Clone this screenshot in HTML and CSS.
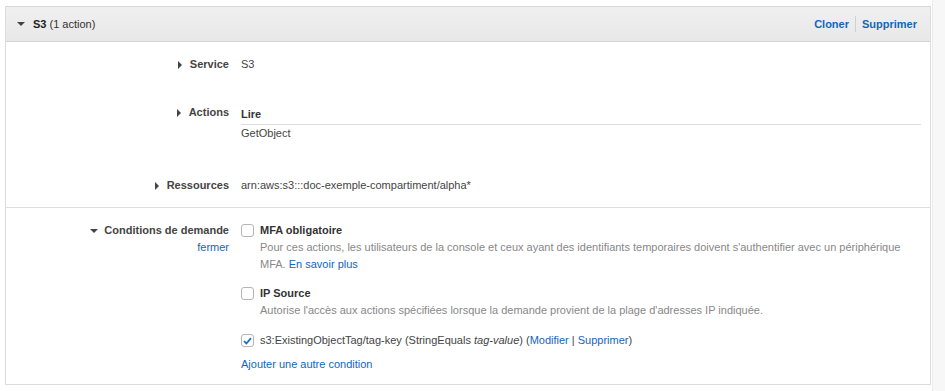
FILE: index.html
```html
<!DOCTYPE html>
<html lang="fr">
<head>
    <meta charset="UTF-8">
    <title>S3 (1 action)</title>
    <link rel="stylesheet" href="styles.css">
</head>
<body>

<div class="page">
    <div class="panel">
        <div class="panel-header">
            <div class="panel-title">
                <span class="caret-down"></span>
                <strong>S3</strong>&nbsp;(1 action)
            </div>
            <div class="panel-actions">
                <a href="#">Cloner</a>
                <span class="sep"></span>
                <a href="#">Supprimer</a>
            </div>
        </div>

        <div class="section">
            <div class="row row-service">
                <div class="label"><span class="caret-right"></span>Service</div>
                <div class="value">S3</div>
            </div>
            <div class="row row-actions">
                <div class="label"><span class="caret-right"></span>Actions</div>
                <div class="value">
                    <div class="group-title">Lire</div>
                    <div>GetObject</div>
                </div>
            </div>
            <div class="row">
                <div class="label"><span class="caret-right"></span>Ressources</div>
                <div class="value">arn:aws:s3:::doc-exemple-compartiment/alpha*</div>
            </div>
        </div>

        <div class="section section-conditions">
            <div class="row">
                <div class="label">
                    <div><span class="caret-down"></span>Conditions de demande</div>
                    <a href="#">fermer</a>
                </div>
                <div class="value">
                    <div class="condition">
                        <span class="checkbox"></span>
                        <div>
                            <div class="condition-name">MFA obligatoire</div>
                            <div class="condition-desc">Pour ces actions, les utilisateurs de la console et ceux ayant des identifiants temporaires doivent s'authentifier avec un périphérique MFA. <a href="#">En savoir plus</a></div>
                        </div>
                    </div>
                    <div class="condition">
                        <span class="checkbox"></span>
                        <div>
                            <div class="condition-name">IP Source</div>
                            <div class="condition-desc">Autorise l'accès aux actions spécifiées lorsque la demande provient de la plage d'adresses IP indiquée.</div>
                        </div>
                    </div>
                    <div class="condition condition-set">
                        <span class="checkbox checked">
                            <svg width="9" height="8" viewBox="0 0 9 8"><path d="M1 4.2 L3.4 6.5 L8 1.2" fill="none" stroke="#1a6fc9" stroke-width="1.8"/></svg>
                        </span>
                        <div>s3:ExistingObjectTag/tag-key (StringEquals <em>tag-value</em>) (<a href="#">Modifier</a> | <a href="#">Supprimer</a>)</div>
                    </div>
                    <a href="#" class="add-condition">Ajouter une autre condition</a>
                </div>
            </div>
        </div>
    </div>
    <div class="scroll-strip"></div>
</div>

</body>
</html>
```

FILE: styles.css
```css
body {
    margin: 0;
    font-family: "Liberation Sans", Arial, sans-serif;
    font-size: 11px;
    line-height: 17px;
    color: #444;
    background: #fff;
}
a {
    color: #1166bb;
    text-decoration: none;
}
.page {
    display: flex;
    height: 391px;
}
.panel {
    width: 924px;
    margin: 6px 0 0 5px;
    height: 377px;
    border: 1px solid #dcdcdc;
    border-top-color: #d6d6d6;
}
.scroll-strip {
    flex: 1;
    margin-left: 1px;
    background: #f7f7f7;
    border-left: 1px solid #ececec;
}
.panel-header {
    display: flex;
    justify-content: space-between;
    align-items: center;
    height: 34px;
    padding: 0 13px 0 11px;
    background: linear-gradient(#f0f0f0, #e8e8e8);
    border-bottom: 1px solid #d4d4d4;
}
.panel-title {
    display: flex;
    align-items: center;
    color: #333;
}
.panel-title strong {
    color: #222;
}
.panel-title .caret-down {
    margin-right: 8px;
}
.panel-actions {
    display: flex;
    align-items: center;
    font-weight: bold;
}
.panel-actions .sep {
    width: 1px;
    height: 16px;
    background: #d0d0d0;
    margin: 0 6px;
}
.caret-down {
    display: inline-block;
    width: 0;
    height: 0;
    border-left: 4px solid transparent;
    border-right: 4px solid transparent;
    border-top: 4px solid #444;
    vertical-align: middle;
    margin-right: 6px;
}
.caret-right {
    display: inline-block;
    width: 0;
    height: 0;
    border-top: 4px solid transparent;
    border-bottom: 4px solid transparent;
    border-left: 4px solid #444;
    vertical-align: -1px;
    margin-right: 8px;
}
.section {
    padding: 14px 0 13px;
    border-bottom: 1px solid #dedede;
}
.section-conditions {
    border-bottom: none;
    padding-bottom: 12px;
}
.row {
    display: grid;
    grid-template-columns: 223px 1fr;
    column-gap: 12px;
}
.row-service {
    margin-bottom: 31px;
}
.row-actions {
    margin-bottom: 35px;
}
.label {
    text-align: right;
    font-weight: bold;
    color: #444;
}
.label a {
    font-weight: normal;
}
.value {
    padding-right: 9px;
}
.group-title {
    font-weight: bold;
    color: #333;
    padding-top: 2px;
    padding-bottom: 1px;
    border-bottom: 1px solid #ddd;
}
.condition {
    display: flex;
    gap: 6px;
    margin-bottom: 12px;
}
.condition-set {
    margin-top: 13px;
    margin-bottom: 7px;
}
.condition-name {
    font-weight: bold;
    color: #333;
}
.condition-desc {
    color: #888;
}
.checkbox {
    flex: none;
    box-sizing: border-box;
    width: 13px;
    height: 13px;
    margin-top: 2px;
    border: 1px solid #b5b5b5;
    border-radius: 3px;
    background: #fff;
    display: flex;
    align-items: center;
    justify-content: center;
}
.add-condition {
    display: block;
}
```
